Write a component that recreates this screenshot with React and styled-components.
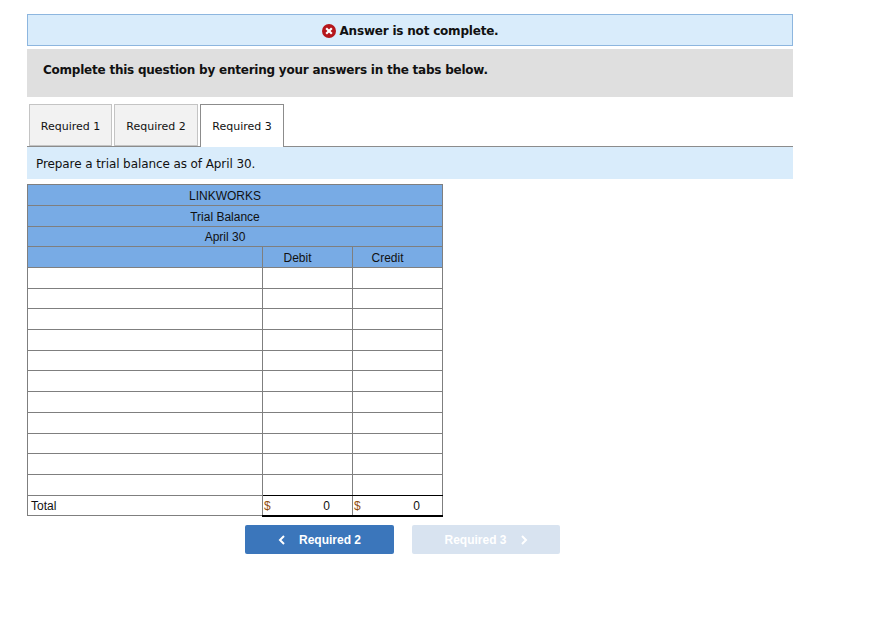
import React from "react";
import styled, { createGlobalStyle } from "styled-components";

const GlobalStyle = createGlobalStyle`
  body {
    margin: 0;
    background: #fff;
    font-family: "DejaVu Sans", Verdana, sans-serif;
    color: #111;
  }
`;

const Page = styled.div`
  width: 766px;
  padding: 14px 0 0 27px;
`;

const Banner = styled.div`
  height: 32px;
  box-sizing: border-box;
  display: flex;
  align-items: center;
  justify-content: center;
  gap: 4px;
  padding-top: 1px;
  background: #d9ecfb;
  border: 1px solid #8db6df;
  font-size: 12px;
  font-weight: bold;
  letter-spacing: -0.2px;
`;

const Notice = styled.div`
  height: 48px;
  box-sizing: border-box;
  margin-top: 3px;
  padding: 13px 16px;
  background: #dfdfdf;
  font-size: 12px;
  font-weight: bold;
  letter-spacing: -0.23px;
  line-height: 17px;
`;

const Tabs = styled.div`
  display: flex;
  gap: 2px;
  height: 43px;
  box-sizing: border-box;
  margin-top: 7px;
  padding-left: 2px;
  border-bottom: 1px solid #8c8c8c;
`;

const Tab = styled.div`
  width: ${(p) => p.$width}px;
  height: ${(p) => (p.$active ? "43px" : "42px")};
  box-sizing: border-box;
  display: flex;
  align-items: center;
  justify-content: center;
  padding-top: ${(p) => (p.$active ? "1px" : "2px")};
  font-size: 11px;
  background: ${(p) => (p.$active ? "#fff" : "#f2f2f2")};
  border: 1px solid ${(p) => (p.$active ? "#8c8c8c" : "#c4c4c4")};
  border-bottom: ${(p) => (p.$active ? "none" : "1px solid #c4c4c4")};
`;

const Instruction = styled.div`
  height: 32px;
  box-sizing: border-box;
  padding: 2px 9px 0;
  display: flex;
  align-items: center;
  background: #d9ecfb;
  font-size: 12px;
  letter-spacing: -0.09px;
`;

const Sheet = styled.table`
  margin-top: 5.3px;
  width: 416px;
  table-layout: fixed;
  border-collapse: collapse;
  font-family: "Liberation Sans", Arial, sans-serif;
  font-size: 12px;
  color: #111;

  td {
    height: 20.69px;
    box-sizing: border-box;
    padding: 0;
    border: 1px solid #7f7f7f;
  }
`;

const HeadCell = styled.td`
  background: #78abe5;
  text-align: center;
  && {
    padding: 1.4px 20px 0 0;
  }
`;

const BlankCell = styled.td`
  && {
    border-bottom-color: ${(p) => (p.$rule ? "#000" : "#7f7f7f")};
  }
`;

const TotalLabel = styled.td`
  && {
    padding: 2px 0 0 3px;
  }
`;

const Amount = styled.td`
  && {
    padding-top: 2px;
    border-top: 1px solid #000;
    border-bottom: 2px solid #000;
  }
`;

const AmountInner = styled.div`
  display: flex;
  justify-content: space-between;
  padding: 0 22px 0 1px;
`;

const Dollar = styled.span`
  color: #94500f;
`;

const Nav = styled.div`
  display: flex;
  gap: 18px;
  margin: 8.7px 0 0 218px;
`;

const NavButton = styled.div`
  height: 29px;
  box-sizing: border-box;
  display: flex;
  align-items: center;
  justify-content: center;
  gap: 13px;
  border-radius: 2px;
  font-family: "Liberation Sans", Arial, sans-serif;
  font-size: 12px;
  font-weight: bold;
  color: #fff;
  background: ${(p) => (p.$disabled ? "#d8e3f0" : "#3b76bb")};
  width: ${(p) => (p.$disabled ? "148px" : "149px")};
`;

const Chevron = ({ dir }) => (
  <svg width="8" height="10" viewBox="0 0 8 10">
    <path
      d={dir === "left" ? "M6 1 L2 5 L6 9" : "M2 1 L6 5 L2 9"}
      fill="none"
      stroke="#fff"
      strokeWidth="2"
    />
  </svg>
);

const ErrorIcon = () => (
  <svg width="14" height="14" viewBox="0 0 14 14">
    <circle cx="7" cy="7" r="7" fill="#b5161b" />
    <path d="M4.2 4.2 L9.8 9.8 M9.8 4.2 L4.2 9.8" stroke="#fff" strokeWidth="2.2" />
  </svg>
);

const headings = ["LINKWORKS", "Trial Balance", "April 30"];
const blankRows = Array.from({ length: 11 }, (_, i) => i);

export default function App() {
  return (
    <Page>
      <GlobalStyle />
      <Banner>
        <ErrorIcon />
        Answer is not complete.
      </Banner>
      <Notice>Complete this question by entering your answers in the tabs below.</Notice>
      <Tabs>
        <Tab $width={83}>Required 1</Tab>
        <Tab $width={84}>Required 2</Tab>
        <Tab $width={84} $active>Required 3</Tab>
      </Tabs>
      <Instruction>Prepare a trial balance as of April 30.</Instruction>
      <Sheet>
        <colgroup>
          <col style={{ width: 235 }} />
          <col style={{ width: 90 }} />
          <col style={{ width: 90 }} />
        </colgroup>
        <tbody>
          {headings.map((h) => (
            <tr key={h}>
              <HeadCell colSpan={3}>{h}</HeadCell>
            </tr>
          ))}
          <tr>
            <HeadCell />
            <HeadCell>Debit</HeadCell>
            <HeadCell>Credit</HeadCell>
          </tr>
          {blankRows.map((i) => (
            <tr key={i}>
              <td />
              <BlankCell $rule={i === 10} />
              <BlankCell $rule={i === 10} />
            </tr>
          ))}
          <tr>
            <TotalLabel>Total</TotalLabel>
            <Amount>
              <AmountInner>
                <Dollar>$</Dollar>
                <span>0</span>
              </AmountInner>
            </Amount>
            <Amount>
              <AmountInner>
                <Dollar>$</Dollar>
                <span>0</span>
              </AmountInner>
            </Amount>
          </tr>
        </tbody>
      </Sheet>
      <Nav>
        <NavButton>
          <Chevron dir="left" />
          Required 2
        </NavButton>
        <NavButton $disabled>
          Required 3
          <Chevron dir="right" />
        </NavButton>
      </Nav>
    </Page>
  );
}
